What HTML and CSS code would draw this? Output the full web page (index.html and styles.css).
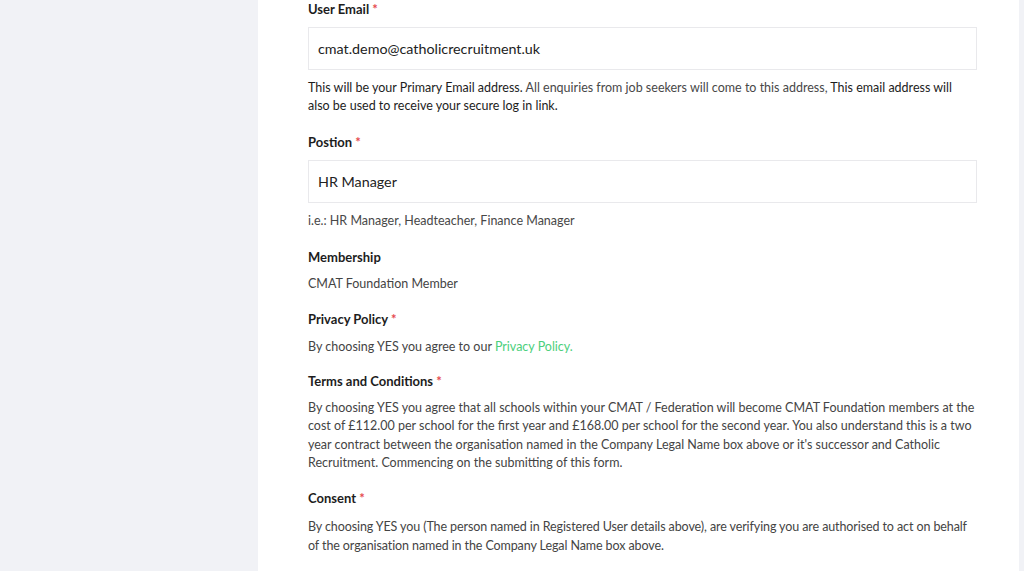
FILE: index.html
```html
<!DOCTYPE html>
<html lang="en">
<head>
<meta charset="utf-8">
<title>Registration</title>
<link rel="stylesheet" href="styles.css">
</head>
<body>
<div class="page">
  <aside class="sidebar"></aside>
  <main class="content">
    <form class="form">
      <div class="field field-first">
        <label class="label">User Email <span class="req">*</span></label>
        <div class="input">cmat.demo@catholicrecruitment.uk</div>
        <p class="help"><span class="dark">This will be your Primary Email address.</span> All enquiries from job seekers will come to this address, <span class="dark">This email address will also be used to receive your secure log in link.</span></p>
      </div>
      <div class="field">
        <label class="label">Postion <span class="req">*</span></label>
        <div class="input">HR Manager</div>
        <p class="help">i.e.: HR Manager, Headteacher, Finance Manager</p>
      </div>
      <div class="field">
        <label class="label">Membership</label>
        <p class="text">CMAT Foundation Member</p>
      </div>
      <div class="field field-after-text">
        <label class="label">Privacy Policy <span class="req">*</span></label>
        <p class="text text-loose">By choosing YES you agree to our <a class="link" href="#">Privacy Policy.</a></p>
      </div>
      <div class="field field-tight">
        <label class="label">Terms and Conditions <span class="req">*</span></label>
        <p class="text">By choosing YES you agree that all schools within your CMAT / Federation will become CMAT Foundation members at the cost of £112.00 per school for the first year and £168.00 per school for the second year. You also understand this is a two year contract between the organisation named in the Company Legal Name box above or it's successor and Catholic Recruitment. Commencing on the submitting of this form.</p>
      </div>
      <div class="field field-after-text">
        <label class="label">Consent <span class="req">*</span></label>
        <p class="text text-consent">By choosing YES you (The person named in Registered User details above), are verifying you are authorised to act on behalf of the organisation named in the Company Legal Name box above.</p>
      </div>
    </form>
  </main>
  <div class="edge"></div>
</div>
</body>
</html>
```
FILE: styles.css
```css
html, body {
  margin: 0;
  padding: 0;
  height: 100%;
  overflow: hidden;
}
body {
  font-family: "Lato", "Open Sans", sans-serif;
  color: #222;
  background: #fff;
}
.page {
  display: flex;
  height: 571px;
}
.sidebar {
  width: 258px;
  flex: none;
  background: #f1f2f6;
}
.content {
  flex: 1;
  background: #fff;
  padding: 0 42px 0 50px;
}
.edge {
  width: 5px;
  flex: none;
  background: #f1f2f6;
}
.form {
  display: flex;
  flex-direction: column;
}
.field {
  display: flex;
  flex-direction: column;
  margin-top: 18px;
}
.field-first {
  margin-top: 0;
}
.field-after-text {
  margin-top: 17px;
}
.field-tight {
  margin-top: 15px;
}
.label {
  font-weight: 700;
  font-size: 13px;
  line-height: 18px;
  color: #1d1d1d;
}
.req {
  color: #e5484d;
  font-weight: 700;
}
.input {
  box-sizing: border-box;
  margin-top: 9px;
  height: 43px;
  border: 1px solid #e9e9ec;
  padding: 0 9px;
  font-size: 14.3px;
  line-height: 41px;
  color: #222;
}
.help {
  margin: 9px 0 0 0;
  font-size: 12.5px;
  line-height: 18px;
  color: #484848;
  max-width: 660px;
}
.help .dark {
  color: #1d1d1d;
}
.text {
  margin: 9px 0 0 0;
  font-size: 12.5px;
  line-height: 18.4px;
  color: #444;
  max-width: 669px;
}
.text-loose {
  margin-top: 10px;
}
.text-consent {
  margin-top: 11px;
  letter-spacing: -0.1px;
}
.link {
  color: #4ccf7c;
  text-decoration: none;
}
```
